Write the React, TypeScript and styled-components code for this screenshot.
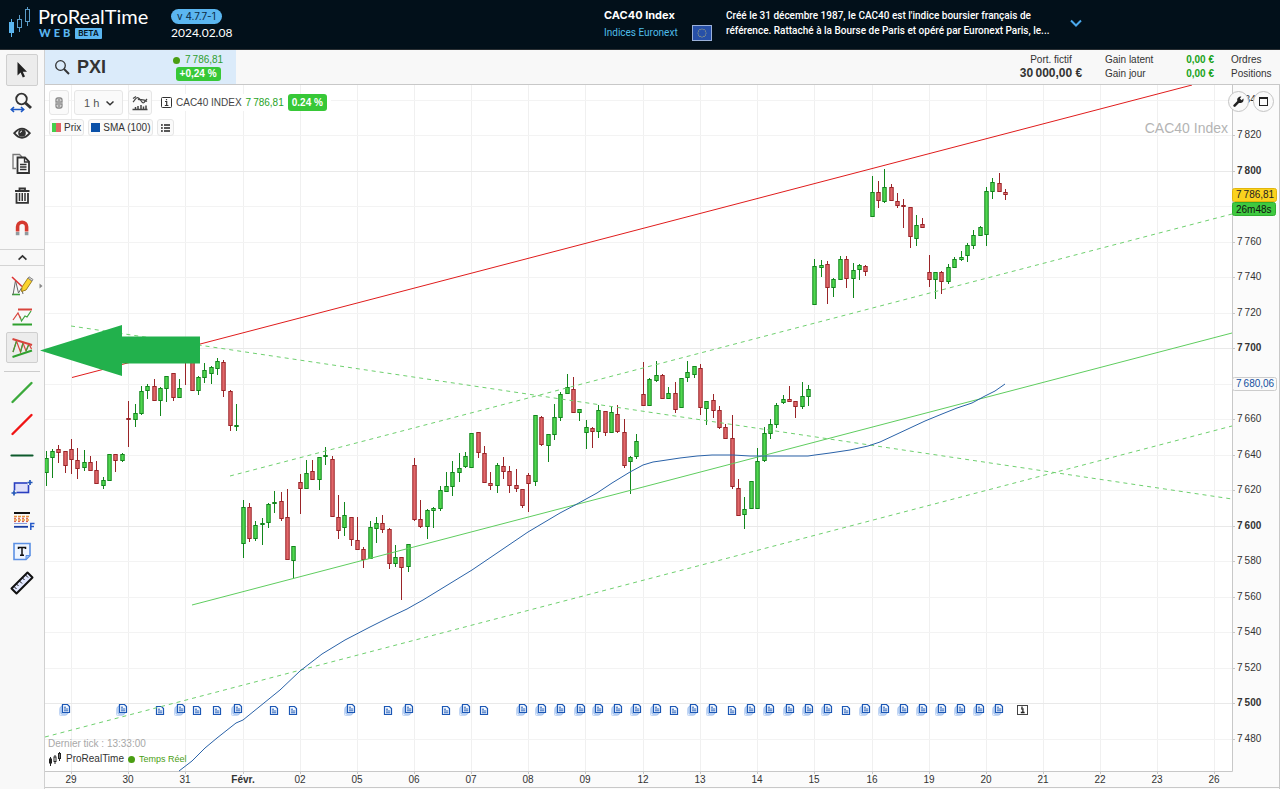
import React from "react";
import styled, { createGlobalStyle } from "styled-components";

const GlobalStyle = createGlobalStyle`
  * { box-sizing: border-box; }
  body {
    margin: 0;
    background: #fff;
    color: #333;
    font: 10px/14px "Liberation Sans", Arial, sans-serif;
  }
  button, input, select { font: inherit; color: inherit; margin: 0; }
  button { cursor: pointer; }
`;

/* ---------- header ---------- */

const Page = styled.div`
  display: flex;
  flex-direction: column;
  min-height: 100vh;
`;

const Header = styled.header`
  display: flex;
  height: 50px;
  background: #02101a;
  color: #fff;
  font-family: Inter, "Liberation Sans", sans-serif;
  border-bottom: 1px solid #2a2f33;
`;

const HeaderLeft = styled.div`
  display: flex;
  flex: 0 0 604px;
  padding: 5px 0 0 7px;
`;

const BrandText = styled.div`
  width: 134px;
  padding-left: 1px;
`;

const BrandName = styled.div`
  font: 20px/22px Lato, sans-serif;
`;

const BrandSub = styled.div`
  display: flex;
  align-items: center;
  gap: 2px;
  padding-left: 1px;
  font: 900 11px/12px Lato, sans-serif;
  letter-spacing: 3px;
  color: #5bb6f0;
`;

const Beta = styled.span`
  padding: 0 3px;
  border-radius: 1px;
  background: #5bb6f0;
  color: #02101a;
  font: 600 8px/11px Inter, sans-serif;
  letter-spacing: 0;
`;

const Version = styled.div`
  display: flex;
  flex-direction: column;
  align-items: flex-start;
  gap: 2px;
  padding-top: 4px;
  font: 12px/14px Lato, sans-serif;
`;

const Pill = styled.span`
  padding: 0 6px;
  border-radius: 8px;
  background: #5bb6f0;
  color: #0b2a44;
  font: 10px/15px Inter, sans-serif;
`;

const IndexName = styled.div`
  width: 88px;
  padding-top: 7px;
  font-size: 10px;
  line-height: 17px;
  strong { display: block; font-weight: 700; font-size: 11px; line-height: 17px; }
  a { color: #4fbde9; font-family: Roboto, sans-serif; text-decoration: none; }
`;

const Flag = styled.svg`
  flex: none;
  margin: 25px 14px 0 0;
`;

const Description = styled.p`
  flex: 0 1 340px;
  margin: 0;
  padding-top: 8px;
  font-family: Roboto, sans-serif;
  font-size: 10px;
  font-weight: 500;
  line-height: 15px;
  white-space: nowrap;
`;

const BareButton = styled.button`
  display: flex;
  align-items: center;
  padding: 0;
  border: 0;
  background: none;
`;

/* ---------- work area ---------- */

const Work = styled.div`
  position: relative;
  display: flex;
  flex: 1;
`;

const Sidebar = styled.nav`
  flex: 0 0 45px;
  border-right: 1px solid #d0d0d0;
  background: #f8f8f8;
`;

const ToolGroup = styled.div<{ $top: number; $bottom: number; $line?: boolean }>`
  display: flex;
  flex-direction: column;
  align-items: center;
  padding: ${(p) => p.$top}px 0 ${(p) => p.$bottom}px;
  border-bottom: ${(p) => (p.$line ? "1px solid #d4d4d4" : "0")};
`;

const Tool = styled.button<{ $active?: boolean; $tall?: boolean }>`
  display: flex;
  align-items: center;
  justify-content: center;
  width: 32px;
  height: ${(p) => (p.$tall ? 32 : 31)}px;
  padding: 0;
  border: 1px solid ${(p) => (p.$active ? "#cfcfcf" : "transparent")};
  border-radius: 2px;
  background: ${(p) => (p.$active ? "#ececec" : "transparent")};
  svg { flex: none; overflow: visible; }
`;

const Collapse = styled(BareButton)`
  justify-content: center;
  width: 100%;
  height: 16px;
  border-bottom: 1px solid #d4d4d4;
`;

const Divider = styled.hr`
  width: 36px;
  margin: 0 auto;
  border: 0;
  border-top: 1px solid #ccc;
`;

const Main = styled.main`
  flex: 1;
  min-width: 0;
`;

const InfoBar = styled.div`
  display: flex;
  height: 35px;
  border-bottom: 1px solid #c8c8c8;
  background: #f8f8f8;
`;

const SymbolTab = styled.div`
  display: flex;
  align-items: center;
  width: 191px;
  padding-left: 9px;
  background: #dbebfa;
`;

const SymbolInput = styled.input`
  width: 96px;
  margin-left: 7px;
  padding: 0;
  border: 0;
  background: none;
  color: #333;
  font: 700 18px/22px "Liberation Sans", Arial, sans-serif;
`;

const SymbolQuote = styled.div`
  display: flex;
  flex-direction: column;
  align-items: center;
  color: #2f9e2f;
  font-size: 10px;
`;

const QuoteLine = styled.div`
  display: flex;
  align-items: center;
  gap: 5px;
`;

const Dot = styled.span`
  width: 7px;
  height: 7px;
  border-radius: 50%;
  background: #4a9e12;
`;

const Badge = styled.span<{ $big?: boolean }>`
  padding: 0 4px;
  border-radius: 3px;
  background: #37c837;
  color: #fff;
  font: 700 10px/${(p) => (p.$big ? 17 : 14)}px "Liberation Sans", Arial, sans-serif;
  white-space: nowrap;
`;

const Account = styled.div`
  display: flex;
  flex: 1;
  justify-content: flex-end;
  padding-top: 3px;
`;

const Portfolio = styled.div`
  width: 64px;
  margin-right: 22px;
  text-align: center;
  white-space: nowrap;
  strong { display: block; font-size: 12px; line-height: 13px; }
`;

const Gains = styled.table`
  width: 109px;
  height: 28px;
  margin-right: 17px;
  border-collapse: collapse;
  th, td { padding: 0; font-weight: 400; text-align: left; }
  td { color: #19a319; font-weight: 700; text-align: right; }
`;

const Links = styled.div`
  width: 49px;
  a { display: block; color: inherit; text-decoration: none; }
`;

/* ---------- chart ---------- */

const ChartArea = styled.section`
  position: relative;
  svg { display: block; }
`;

const Overlay = styled.div`
  position: absolute;
  top: 5px;
  left: 4px;
  display: flex;
  flex-direction: column;
  gap: 4px;
`;

const OverlayRow = styled.div<{ $gap: number }>`
  display: flex;
  align-items: center;
  gap: ${(p) => p.$gap}px;
`;

const ChartButton = styled.button<{ $tall?: boolean; $width?: number }>`
  display: flex;
  align-items: center;
  justify-content: center;
  gap: 3px;
  width: ${(p) => (p.$width ? p.$width + "px" : "auto")};
  height: ${(p) => (p.$tall ? 25 : 17)}px;
  padding: 0 2px;
  border: 1px solid #e6e6e6;
  border-radius: 3px;
  background: #fafafa;
  white-space: nowrap;
`;

const Interval = styled.label`
  position: relative;
  display: flex;
  align-items: center;
  width: 49px;
  height: 25px;
  border: 1px solid #e6e6e6;
  border-radius: 3px;
  background: #fafafa;
  select {
    width: 100%;
    height: 100%;
    padding: 0 0 0 9px;
    border: 0;
    background: none;
    appearance: none;
    color: #555;
    font-size: 11px;
  }
  svg { position: absolute; right: 8px; pointer-events: none; }
`;

const Quote = styled.div`
  display: flex;
  align-items: center;
  gap: 4px;
  margin-left: 4px;
  padding-right: 4px;
  background: #fff;
  color: #444;
  white-space: nowrap;
  b { color: #27a327; font-weight: 400; }
`;

const Swatch = styled.i<{ $fill: string }>`
  width: 9px;
  height: 9px;
  background: ${(p) => p.$fill};
`;

const CornerButtons = styled.div`
  position: absolute;
  top: 6px;
  right: 6px;
  display: flex;
  gap: 4px;
`;

const RoundButton = styled.button`
  display: flex;
  align-items: center;
  justify-content: center;
  width: 21px;
  height: 21px;
  padding: 0;
  border: 1px solid #c4c4c4;
  border-radius: 50%;
  background: #fafafa;
`;

const Footer = styled.div`
  position: absolute;
  left: 3px;
  bottom: 22px;
  color: #333;
`;

const LastTick = styled.div`
  color: #a8a8a8;
  line-height: 15px;
`;

const FooterLine = styled.div`
  display: flex;
  align-items: center;
  gap: 4px;
  line-height: 16px;
  em { color: #4a9e12; font-size: 9px; font-style: normal; }
`;

const Pointer = styled.svg`
  position: absolute;
  left: 40px;
  top: 275px;
`;

/* up/down flag, high, low, body top, body bottom (chart coordinates) */
type Bar = [number, number, number, number, number];

const BARS: Bar[] = [
  [1,451,486,458,473],[1,449,478,451,458],[0,445,463,449,453],[0,451,473,451,466],
  [0,439,474,449,460],[0,448,479,460,469],[1,450,471,462,468],[0,456,471,462,471],[0,461,484,470,484],[1,477,489,480,486],[1,454,481,454,481],[0,454,472,454,461],[1,453,462,454,461],
  [0,401,447,418,420],[1,404,427,413,420],[1,386,415,391,414],[1,384,399,386,391],[0,379,401,386,401],[1,387,416,388,401],[1,376,402,376,389],[0,373,401,373,398],[1,379,398,388,398],
  [0,350,385,350,362],[0,355,391,355,391],[1,376,395,377,391],[1,363,383,370,378],[1,366,384,367,374],[1,358,375,361,369],[0,360,397,362,391],[0,390,431,391,426],[1,404,431,425,427],
  [1,500,558,507,544],[0,503,542,507,539],[1,521,541,525,539],[1,518,545,523,524],[1,503,528,504,523],[1,491,513,502,504],[0,492,521,501,519],[0,489,560,517,560],[1,546,578,546,561],
  [0,474,514,482,489],[1,460,489,473,489],[0,460,480,471,480],[1,457,490,457,480],[1,447,465,455,456],[0,456,517,459,517],[0,495,539,517,531],[1,502,536,515,528],[0,517,546,517,540],
  [0,517,550,540,550],[0,547,568,549,560],[1,521,559,527,559],[1,517,543,523,529],[0,515,533,523,530],[0,528,569,529,564],[1,545,567,557,564],[0,557,600,557,568],[1,544,572,544,567],
  [0,458,521,465,520],[0,500,528,519,527],[1,509,539,510,527],[1,507,528,508,511],[1,486,511,490,509],[1,472,492,486,492],[1,461,496,472,487],[1,453,482,468,473],[1,452,468,456,467],
  [1,433,468,433,468],[0,432,458,432,453],[0,446,483,453,483],[0,472,490,483,486],[1,463,493,465,486],[0,457,479,466,472],[0,466,493,471,486],[0,469,492,485,489],[0,489,508,489,506],
  [0,473,512,475,484],[1,415,486,415,482],[0,416,446,417,445],[1,434,462,434,446],[1,404,440,417,435],[1,392,421,394,418],[1,374,394,387,394],[0,377,413,389,413],[1,409,421,409,413],
  [1,420,449,427,433],[0,427,448,428,432],[1,405,438,410,432],[0,411,436,411,433],[1,406,433,412,433],[0,405,433,414,432],[0,419,468,432,466],[1,456,494,457,462],[1,434,459,441,457],
  [0,362,406,394,406],[1,378,406,379,406],[1,361,382,375,381],[0,374,399,375,399],[1,387,399,393,399],[0,382,413,393,410],[1,378,408,378,408],[1,361,382,372,378],[1,366,378,366,375],
  [0,364,415,368,408],[1,401,425,401,409],[0,394,418,400,411],[0,406,429,410,428],[0,424,439,427,439],[0,415,489,438,487],[0,479,516,488,516],[1,497,529,509,515],[1,481,509,481,509],
  [1,448,509,461,509],[1,427,462,433,461],[1,419,439,424,434],[1,403,428,405,425],[1,395,404,399,403],[0,386,402,399,402],[0,401,418,401,407],[1,382,409,396,407],[1,385,406,389,397],
  [1,259,305,266,305],[1,260,277,265,268],[0,261,304,264,288],[1,278,297,279,288],[1,256,280,259,280],[0,256,288,259,279],[1,263,298,270,279],[1,264,280,265,270],[0,265,276,266,272],
  [1,176,217,192,217],[0,181,208,192,201],[1,169,203,187,202],[0,184,201,187,201],[0,193,208,201,206],[0,199,228,205,207],[0,207,248,207,237],[1,215,246,225,239],[0,218,228,224,228],
  [0,255,287,272,280],[1,272,299,272,280],[0,271,294,272,282],[1,264,284,267,282],[1,257,268,259,268],[1,251,261,257,260],[1,243,262,245,256],[1,230,249,235,246],[1,226,236,227,236],
  [1,187,246,191,235],[1,178,199,182,192],[0,173,192,183,192],[0,189,200,192,195],
];

const DAYS: [number, string][] = [
  [71, "29"], [128, "30"], [185, "31"], [243, "Févr."], [300, "02"], [357, "05"], [414, "06"],
  [471, "07"], [528, "08"], [585, "09"], [643, "12"], [700, "13"], [757, "14"], [814, "15"],
  [872, "16"], [929, "19"], [986, "20"], [1043, "21"], [1100, "22"], [1157, "23"], [1214, "26"],
];

const PRICES = Array.from({ length: 19 }, (_, i) => ({
  value: 7840 - i * 20,
  y: Math.round(99.5 + i * 35.5),
}));

const SMA =
  "179,771 192,761 205,748 217,738 236,723 243,720 280,690 300,671 322,654 345,640 370,627 390,617 407,609 414,605 423,600 472,570 528,532 560,513 577,504 597,493 612,483 630,472 643,465 653,462 660,461 680,458 697,456 712,455 733,455 750,456 783,456 808,456 815,455 830,453 850,450 868,446 880,442 895,435 910,428 925,421 942,414 957,408 972,403 985,396 995,391 1005,384";

const SINGLE_NEWS = [160, 197, 217, 274, 293, 388, 446, 484, 674, 732, 846];
const STACKED_NEWS = [
  66, 123, 181, 238, 351, 409, 466, 523, 542, 561, 581, 599, 618, 637, 657, 694, 713, 751, 770,
  790, 809, 828, 866, 885, 904, 923, 942, 961, 980, 999,
];

const NewsDoc = ({ x, y }: { x: number; y: number }) => (
  <g transform={`translate(${x} ${y})`} fill="none" stroke="#1b57b5">
    <path d="M-3.5 .5H1.5L3.5 2.5V8.5H-3.5Z" fill="#f2f7fe" strokeWidth="1.2" />
    <path d="M-2 3.2H0M-2 5H2.2M-2 6.8H2.2" strokeWidth=".9" />
  </g>
);

const NewsStack = ({ x }: { x: number }) => (
  <g>
    <rect x={x - 6.5} y="707.5" width="7" height="8" rx="1" fill="#e6effc" stroke="#c3d7f5" />
    <rect x={x - 5} y="706" width="7" height="8" rx="1" fill="#e6effc" stroke="#86aee8" />
    <NewsDoc x={x} y={704} />
  </g>
);

const spaced = (v: number) => `7\u202f${String(v).slice(1)}`;

const Chart = () => (
  <svg viewBox="45 85 1235 704" width="100%" role="img" aria-label="CAC40 Index, 1 h">
    <rect x="1232" y="85" width="48" height="704" fill="#fbfbfb" />
    <rect x="45" y="771" width="1235" height="18" fill="#fbfbfb" />
    <g stroke="#f0f0f0">
      {DAYS.map(([x]) => <line key={x} x1={x + 0.5} x2={x + 0.5} y1="85" y2="771" />)}
      {PRICES.map(({ value, y }) => (
        <line key={value} x1="45" x2="1232" y1={y + 0.5} y2={y + 0.5} stroke={value % 100 ? "#f3f3f3" : "#e9e9e9"} />
      ))}
    </g>
    <g stroke="#c8c8c8">
      <path d="M1232.5 85V771.5M45 771.5H1232.5M1279.5 85V789M45 787.5H1280" fill="none" />
      {DAYS.map(([x]) => <line key={x} x1={x + 0.5} x2={x + 0.5} y1="772" y2="774" />)}
      {PRICES.map(({ y }) => <line key={y} x1="1233" x2="1235" y1={y + 0.5} y2={y + 0.5} />)}
    </g>

    <text x="1228" y="133" textAnchor="end" fontSize="14" fill="#b4b4b4">CAC40 Index</text>

    {SINGLE_NEWS.map((x) => <NewsDoc key={x} x={x} y={706} />)}
    {STACKED_NEWS.map((x) => <NewsStack key={x} x={x} />)}
    <g>
      <rect x="1017.5" y="705.5" width="10" height="9" fill="#fff" stroke="#444" />
      <path d="M1021 708.9H1022.9V712.5M1020.8 712.5H1024.6M1022 706.5V708" fill="none" stroke="#222" strokeWidth="1.3" />
    </g>

    {BARS.map(([up, high, low, top, bottom], i) => {
      const x = Math.round(71 + (i - 4) * 6.3537);
      const line = up ? "#12861c" : "#9a2428";
      return (
        <g key={i} stroke={line}>
          <line x1={x + 0.5} x2={x + 0.5} y1={high} y2={low} />
          <rect x={x - 1.2} y={top + 0.5} width="3.4" height={Math.max(bottom - top - 1, 1)} fill={up ? "#50d650" : "#e0686a"} />
        </g>
      );
    })}

    <g fill="none">
      <line x1="72" y1="377.5" x2="1192" y2="85" stroke="#e01c1c" />
      <line x1="192" y1="605" x2="1232" y2="333" stroke="#5fcd5f" />
      <g stroke="#6fd06f" strokeDasharray="4 4">
        <line x1="71" y1="326" x2="1232" y2="499" />
        <line x1="230" y1="476" x2="1232" y2="214" />
        <line x1="45" y1="737" x2="1232" y2="426" />
      </g>
      <polyline points={SMA} stroke="#2a62a8" />
    </g>

    <g fontSize="10" fill="#333">
      {PRICES.filter((p) => p.value !== 7780 && p.value !== 7680).map(({ value, y }) => (
        <text key={value} x="1237" y={y + 3} fontWeight={value % 100 ? 400 : 700}>{spaced(value)}</text>
      ))}
      {DAYS.map(([x, label]) => (
        <text key={x} x={x} y="783" textAnchor="middle" fontWeight={label === "Févr." ? 700 : 400}>{label}</text>
      ))}
      <rect x="1232.5" y="188.5" width="44" height="13" rx="2" fill="#fad21e" stroke="#e2b60c" />
      <text x="1236" y="198" fill="#222">{"7\u202f786,81"}</text>
      <rect x="1232.5" y="202.5" width="43" height="13" rx="2" fill="#3fc940" stroke="#2fae30" />
      <text x="1236" y="213" fill="#111">26m48s</text>
      <rect x="1232.5" y="377.5" width="44" height="13" rx="2" fill="#fafafa" stroke="#ccc" />
      <text x="1236" y="387" fill="#14509e">{"7\u202f680,06"}</text>
    </g>
  </svg>
);

/* ---------- small drawings ---------- */

const Icon = ({ children }: { children: React.ReactNode }) => (
  <svg width="32" height="32" viewBox="0 0 32 32" fill="none" stroke="#333" aria-hidden="true">{children}</svg>
);

const LogoCandles = () => (
  <svg width="30" height="34" viewBox="0 0 30 34" fill="none" stroke="#5b9cc8" aria-hidden="true">
    <path d="M4.5 14V32" stroke="#5bb6f0" />
    <rect x="2" y="17" width="5" height="11" fill="#5bb6f0" stroke="none" />
    <path d="M12.5 10V14M12.5 23V27M20.5 2V5M20.5 17V21" />
    <rect x="10.5" y="14.5" width="4" height="8" />
    <rect x="18.5" y="4.5" width="4" height="12" />
  </svg>
);

const Chevron = ({ color = "#333", up = false, size = 8 }: { color?: string; up?: boolean; size?: number }) => (
  <svg width={size} height={size} viewBox="0 0 8 8" fill="none" stroke={color} strokeWidth="1.5" aria-hidden="true">
    <path d={up ? "M.5 5.8L4 2.5L7.5 5.8" : "M.5 2.5L4 5.8L7.5 2.5"} />
  </svg>
);

const STARS = Array.from({ length: 12 }, (_, i) => {
  const a = (i * Math.PI) / 6;
  return [10 + 4 * Math.cos(a), 8 + 4 * Math.sin(a)];
});

export default function App() {
  return (
    <Page>
      <GlobalStyle />
      <Header>
        <HeaderLeft>
          <LogoCandles />
          <BrandText>
            <BrandName>ProRealTime</BrandName>
            <BrandSub>WEB<Beta>BETA</Beta></BrandSub>
          </BrandText>
          <Version>
            <Pill>v 4.7.7-1</Pill>
            <span>2024.02.08</span>
          </Version>
        </HeaderLeft>
        <IndexName>
          <strong>CAC40 Index</strong>
          <a href="#indices">Indices Euronext</a>
        </IndexName>
        <Flag width="20" height="16" viewBox="0 0 20 16" role="img" aria-label="Europe">
          <rect x=".5" y=".5" width="19" height="15" fill="#2750a8" stroke="#9ab0d8" />
          {STARS.map(([x, y], i) => <circle key={i} cx={x} cy={y} r=".6" fill="#b9b87a" />)}
        </Flag>
        <Description>
          Créé le 31 décembre 1987, le CAC40 est l'indice boursier français de<br />
          référence. Rattaché à la Bourse de Paris et opéré par Euronext Paris, le...
        </Description>
        <BareButton aria-label="Déplier">
          <svg width="20" height="12" viewBox="0 0 20 12" fill="none" stroke="#4aa8ec" strokeWidth="2" aria-hidden="true">
            <path d="M5 1.5L10 6.5L15 1.5" />
          </svg>
        </BareButton>
      </Header>

      <Work>
        <Sidebar aria-label="Outils">
          <ToolGroup $top={4} $bottom={8} $line>
            <Tool $active $tall aria-label="Sélection">
              <Icon><path d="M11.5 8V21.5L14.6 18.6L16.8 23.6L19 22.6L16.8 17.8H21Z" fill="#222" stroke="none" /></Icon>
            </Tool>
            <Tool aria-label="Zoom">
              <Icon>
                <circle cx="15.5" cy="13" r="5.3" strokeWidth="1.8" />
                <path d="M19.5 17L25 22" strokeWidth="3" />
                <path d="M5.5 23.5H17.5M8 21L5.3 23.5L8 26M15 21L17.7 23.5L15 26" stroke="#1b57c4" strokeWidth="1.6" />
              </Icon>
            </Tool>
            <Tool aria-label="Afficher">
              <Icon>
                <path d="M8.2 16.2Q16 7 23.8 16.2Q16 25.4 8.2 16.2Z" strokeWidth="1.8" />
                <circle cx="16" cy="16" r="3.8" fill="#333" stroke="none" />
                <path d="M14.2 15.8A2 2 0 0 1 16 14" stroke="#fff" />
              </Icon>
            </Tool>
            <Tool aria-label="Copier">
              <Icon>
                <path d="M10 20.5H7V6.5H13.5L16 9" stroke="#777" strokeWidth="1.3" />
                <path d="M11.5 9.5H19L23 13.5V25H11.5Z" fill="#f8f8f8" strokeWidth="1.8" />
                <path d="M18.5 9.5V14H23M14 16.5H20.5M14 19H20.5M14 21.5H20.5" strokeWidth="1.3" />
              </Icon>
            </Tool>
            <Tool aria-label="Supprimer">
              <Icon>
                <path d="M9 12H23.5M13.5 12V9.5H19V12" strokeWidth="1.8" />
                <path d="M10.5 14V23.8H22V14" strokeWidth="1.8" />
                <path d="M13.5 14V22M16.25 14V22M19 14V22" strokeWidth="1.5" />
              </Icon>
            </Tool>
            <Tool aria-label="Aimant">
              <Icon>
                <path d="M11.6 21.5V16.8A4.5 4.5 0 0 1 20.6 16.8V21.5" stroke="#d5392f" strokeWidth="3.6" />
                <path d="M11.6 22V25.2M20.6 22V25.2" stroke="#909a9e" strokeWidth="3.6" />
              </Icon>
            </Tool>
          </ToolGroup>
          <Collapse aria-label="Replier"><Chevron up size={9} /></Collapse>
          <ToolGroup $top={4} $bottom={8}>
            <Tool aria-label="Dessin">
              <Icon>
                <path d="M6 24.5H14" stroke="#3aa33a" strokeWidth="1.6" />
                <path d="M7 25L9.5 10.5L12.5 23L15.5 18L17 24" stroke="#666" />
                <path d="M6 7L16 16.5" stroke="#d33" strokeWidth="1.6" />
                <path d="M16 17L22 8L26 11L20 20L15.5 21.5Z" fill="#fbd42c" stroke="#a08020" />
                <path d="M22 8L23 6.8L27 9.5L26 11Z" fill="#ddd" stroke="#888" />
                <path d="M33.5 13.5L36.5 16L33.5 18.5Z" fill="#888" stroke="none" />
              </Icon>
            </Tool>
            <Tool aria-label="Supports et résistances">
              <Icon>
                <path d="M12 8.5H26" stroke="#d8443c" strokeWidth="2" />
                <path d="M14 15.5L15.5 20L19 15L21 16L25 10" stroke="#3aa33a" strokeWidth="1.2" />
                <path d="M7 19L12 12L14.5 17.5" stroke="#d8443c" strokeWidth="1.2" />
                <path d="M6.5 23.5H26" stroke="#2fa12f" strokeWidth="2" />
              </Icon>
            </Tool>
            <Tool $active aria-label="Canaux">
              <Icon>
                <path d="M7 20L10.5 9L14.5 20L17 11L20 19L23 12L25.5 17" stroke="#d8443c" strokeWidth="1.2" />
                <path d="M7 20L10.5 9M14.5 20L17 11M20 19L23 12" stroke="#3aa33a" strokeWidth="1.2" />
                <path d="M6.5 7L26 13" stroke="#d8443c" strokeWidth="2" />
                <path d="M6.5 25L26 18.5" stroke="#2fa12f" strokeWidth="2" />
              </Icon>
            </Tool>
          </ToolGroup>
          <Divider />
          <ToolGroup $top={4} $bottom={8}>
            <Tool $tall aria-label="Ligne verte"><Icon><path d="M6.5 26L25.5 7" stroke="#3caa3c" strokeWidth="2.4" strokeLinecap="round" /></Icon></Tool>
            <Tool $tall aria-label="Ligne rouge"><Icon><path d="M6.5 26L25.5 7" stroke="#f01414" strokeWidth="2.4" strokeLinecap="round" /></Icon></Tool>
            <Tool $tall aria-label="Ligne horizontale"><Icon><path d="M5.5 15.5H26.5" stroke="#0d5a2c" strokeWidth="2.2" strokeLinecap="round" /></Icon></Tool>
            <Tool $tall aria-label="Rectangle">
              <Icon>
                <rect x="8.5" y="11" width="14" height="9.5" fill="#dfe0fa" stroke="#2a3fc0" strokeWidth="1.6" />
                <path d="M21.5 10.5H26.5M24 8V13M5.5 21H10.5M8 18.5V23.5" stroke="#f8f8f8" strokeWidth="4" />
                <path d="M21.5 10.5H26.5M24 8V13M5.5 21H10.5M8 18.5V23.5" stroke="#2458b8" strokeWidth="1.7" />
              </Icon>
            </Tool>
            <Tool $tall aria-label="Fibonacci">
              <Icon>
                <path d="M8 9H24" stroke="#111" strokeWidth="2" />
                <path d="M8 12.5H24M8 16H24" stroke="#e8923a" strokeWidth="1.4" strokeDasharray="3 1" />
                <path d="M8 14.3H24M8 17.6H24" stroke="#cf4a40" strokeDasharray="2 2" />
                <path d="M8 19.5H21" stroke="#8a9fe0" />
                <path d="M8 22.8H22" stroke="#173ba0" strokeWidth="1.8" />
                <path d="M24.8 26V19.5H28.5M24.8 22.6H28" stroke="#2458c8" strokeWidth="1.5" />
              </Icon>
            </Tool>
            <Tool $tall aria-label="Texte">
              <Icon>
                <path d="M8 7.5H24V19.5L20 23.5H8Z" fill="#eef5ff" stroke="#5b90e4" strokeWidth="1.6" />
                <path d="M24 19.5H20V23.5Z" fill="#9fc2f4" stroke="#5b90e4" />
                <path d="M12.5 13V11.5H19.5V13M16 11.5V19M14 19.2H18" stroke="#111" strokeWidth="1.5" />
              </Icon>
            </Tool>
            <Tool $tall aria-label="Règle">
              <Icon>
                <path d="M21.5 4.5L26.5 9.5L10.5 25.5L5.5 20.5Z" fill="#e2e8ff" stroke="#111" strokeWidth="2" strokeLinejoin="round" />
                <path d="M19.5 7L22 9.5M16.5 10L18.5 12M13.5 13L16 15.5M10.5 16L12.5 18M8 18.5L10.5 21" stroke="#111" strokeWidth="1" />
              </Icon>
            </Tool>
          </ToolGroup>
        </Sidebar>

        <Main>
          <InfoBar>
            <SymbolTab>
              <svg width="16" height="16" viewBox="0 0 16 16" fill="none" stroke="#333" aria-hidden="true">
                <circle cx="6.5" cy="6.5" r="4.8" strokeWidth="1.3" />
                <path d="M10 10L15 15" strokeWidth="2" />
              </svg>
              <SymbolInput aria-label="Symbole" defaultValue="PXI" />
              <SymbolQuote>
                <QuoteLine><Dot />{"7\u202f786,81"}</QuoteLine>
                <Badge>+0,24 %</Badge>
              </SymbolQuote>
            </SymbolTab>
            <Account>
              <Portfolio>Port. fictif<strong>{"30\u202f000,00 €"}</strong></Portfolio>
              <Gains>
                <tbody>
                  <tr><th scope="row">Gain latent</th><td>0,00 €</td></tr>
                  <tr><th scope="row">Gain jour</th><td>0,00 €</td></tr>
                </tbody>
              </Gains>
              <Links>
                <a href="#ordres">Ordres</a>
                <a href="#positions">Positions</a>
              </Links>
            </Account>
          </InfoBar>

          <ChartArea>
            <Chart />
            <Overlay>
              <OverlayRow $gap={5}>
                <ChartButton $tall $width={20} aria-label="Lier">
                  <svg width="8" height="12" viewBox="0 0 8 12" fill="none" stroke="#888" strokeWidth="1.3" aria-hidden="true">
                    <path d="M1 5V3A2 2 0 0 1 3 1H5A2 2 0 0 1 7 3V5ZM1 7V9A2 2 0 0 0 3 11H5A2 2 0 0 0 7 9V7ZM2.5 3H5.5M2.5 9H5.5" />
                  </svg>
                </ChartButton>
                <Interval>
                  <select aria-label="Unité de temps" defaultValue="1 h"><option>1 h</option></select>
                  <Chevron />
                </Interval>
                <ChartButton $tall $width={24} aria-label="Indicateurs">
                  <svg width="16" height="16" viewBox="0 0 16 16" fill="none" stroke="#444" aria-hidden="true">
                    <path d="M1 7C3 5 4 1.5 6.5 3S10 9 12 7.5L15 4M1 3.5L4 1.5M6 4C8 6 10 3 15 6.5" strokeWidth="1.2" />
                    <path d="M.5 14.5H15.5M3.5 14V12M6 14V11M9 14V10M11.5 14V11.5M14 14V10.5" strokeWidth="1.5" />
                  </svg>
                </ChartButton>
                <Quote>
                  <svg width="11" height="11" viewBox="0 0 11 11" fill="none" stroke="#333" aria-hidden="true">
                    <rect x=".5" y=".5" width="10" height="10" rx="1" />
                    <path d="M4 4.5H5.7V8.5M3.8 8.5H7.4M5.5 2V3.3" strokeWidth="1.2" />
                  </svg>
                  <span>CAC40 INDEX</span>
                  <b>{"7\u202f786,81"}</b>
                  <Badge $big>0.24 %</Badge>
                </Quote>
              </OverlayRow>
              <OverlayRow $gap={4}>
                <ChartButton><Swatch $fill="linear-gradient(90deg, #43cf4b 50%, #e06464 50%)" />Prix</ChartButton>
                <ChartButton><Swatch $fill="#0a50a8" />SMA (100)</ChartButton>
                <ChartButton $width={17} aria-label="Liste">
                  <svg width="9" height="8" viewBox="0 0 9 8" fill="none" stroke="#222" aria-hidden="true">
                    <path d="M0 1H1.8M3 1H9M0 4H1.8M3 4H9M0 7H1.8M3 7H9" strokeWidth="1.3" />
                  </svg>
                </ChartButton>
              </OverlayRow>
            </Overlay>
            <CornerButtons>
              <RoundButton aria-label="Réglages">
                <svg width="11" height="11" viewBox="0 0 11 11" aria-hidden="true">
                  <path d="M1.6 9.6L6 5.2" stroke="#222" strokeWidth="2.6" strokeLinecap="round" />
                  <path d="M10.3 2.6L8.6 4.2L6.9 2.6L8.4.8A3.2 3.2 0 1 0 10.3 2.6Z" fill="#222" />
                </svg>
              </RoundButton>
              <RoundButton aria-label="Fenêtre">
                <svg width="9" height="9" viewBox="0 0 9 9" fill="none" stroke="#222" aria-hidden="true">
                  <rect x=".5" y=".5" width="8" height="8" />
                  <path d="M0 1H9" strokeWidth="2" />
                </svg>
              </RoundButton>
            </CornerButtons>
            <Footer>
              <LastTick>Dernier tick : 13:33:00</LastTick>
              <FooterLine>
                <svg width="14" height="14" viewBox="0 0 14 14" fill="none" stroke="#222" aria-hidden="true">
                  <path d="M2.5 5V14M7 3V12M11.5 0V9" />
                  <rect x="1.5" y="7" width="2" height="4" fill="#222" />
                  <rect x="6" y="5" width="2" height="4.5" fill="#fff" />
                  <rect x="10.5" y="1.5" width="2" height="5" fill="#777" />
                </svg>
                ProRealTime
                <Dot />
                <em>Temps Réel</em>
              </FooterLine>
            </Footer>
          </ChartArea>
        </Main>

        <Pointer width="160" height="51" viewBox="0 0 160 51" aria-hidden="true">
          <path d="M0 25.5L82 0V11.5H160V38.5H82V51Z" fill="#22b14c" />
        </Pointer>
      </Work>
    </Page>
  );
}
